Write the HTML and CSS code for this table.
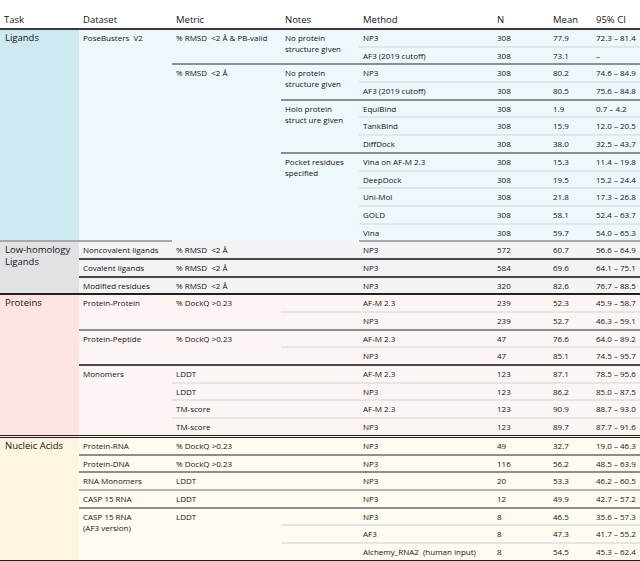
FILE: index.html
```html
<!DOCTYPE html>
<html>
<head>
<meta charset="utf-8">
<link rel="stylesheet" href="styles.css">
</head>
<body>
<table class="results">
  <colgroup>
    <col class="c-task"><col class="c-data"><col class="c-metric"><col class="c-notes">
    <col class="c-method"><col class="c-n"><col class="c-mean"><col class="c-ci">
  </colgroup>
  <thead>
    <tr>
      <th>Task</th><th>Dataset</th><th>Metric</th><th>Notes</th><th>Method</th><th>N</th><th>Mean</th><th>95% CI</th>
    </tr>
  </thead>
  <tbody class="lig">
    <tr>
      <td class="task bg" rowspan="12">Ligands</td>
      <td rowspan="12" class="bg">PoseBusters&nbsp; V2</td>
      <td rowspan="2" class="bg b-gray">% RMSD &nbsp;&lt;2 Å &amp; PB-valid</td>
      <td rowspan="2" class="bg b-gray">No protein<br>structure given</td>
      <td class="b-light">NP3</td><td class="b-light">308</td><td class="b-light">77.9</td><td class="b-light">72.3 – 81.4</td>
    </tr>
    <tr><td class="b-gray">AF3 (2019 cutoff)</td><td class="b-gray">308</td><td class="b-gray">73.1</td><td class="b-gray">–</td></tr>
    <tr>
      <td rowspan="10" class="bg">% RMSD &nbsp;&lt;2 Å</td>
      <td rowspan="2" class="bg b-gray">No protein<br>structure given</td>
      <td class="b-light">NP3</td><td class="b-light">308</td><td class="b-light">80.2</td><td class="b-light">74.6 – 84.9</td>
    </tr>
    <tr><td class="b-gray">AF3 (2019 cutoff)</td><td class="b-gray">308</td><td class="b-gray">80.5</td><td class="b-gray">75.6 – 84.8</td></tr>
    <tr>
      <td rowspan="3" class="bg b-gray">Holo protein<br>struct ure given</td>
      <td class="b-light">EquiBind</td><td class="b-light">308</td><td class="b-light">1.9</td><td class="b-light">0.7 – 4.2</td>
    </tr>
    <tr><td class="b-light">TankBind</td><td class="b-light">308</td><td class="b-light">15.9</td><td class="b-light">12.0 – 20.5</td></tr>
    <tr><td class="b-gray">DiffDock</td><td class="b-gray">308</td><td class="b-gray">38.0</td><td class="b-gray">32.5 – 43.7</td></tr>
    <tr>
      <td rowspan="5" class="bg">Pocket residues<br>specified</td>
      <td class="b-light">Vina on AF-M 2.3</td><td class="b-light">308</td><td class="b-light">15.3</td><td class="b-light">11.4 – 19.8</td>
    </tr>
    <tr><td class="b-light">DeepDock</td><td class="b-light">308</td><td class="b-light">19.5</td><td class="b-light">15.2 – 24.4</td></tr>
    <tr><td class="b-light">Uni-Mol</td><td class="b-light">308</td><td class="b-light">21.8</td><td class="b-light">17.3 – 26.8</td></tr>
    <tr><td class="b-light">GOLD</td><td class="b-light">308</td><td class="b-light">58.1</td><td class="b-light">52.4 – 63.7</td></tr>
    <tr><td>Vina</td><td>308</td><td>59.7</td><td>54.0 – 65.3</td></tr>
  </tbody>
  <tbody class="low">
    <tr>
      <td class="task bg" rowspan="3">Low-homology<br>Ligands</td>
      <td class="b-dark">Noncovalent ligands</td><td class="b-dark">% RMSD &nbsp;&lt;2 Å</td><td class="b-dark"></td>
      <td class="b-dark">NP3</td><td class="b-dark">572</td><td class="b-dark">60.7</td><td class="b-dark">56.6 – 64.9</td>
    </tr>
    <tr>
      <td class="b-dark">Covalent ligands</td><td class="b-dark">% RMSD &nbsp;&lt;2 Å</td><td class="b-dark"></td>
      <td class="b-dark">NP3</td><td class="b-dark">584</td><td class="b-dark">69.6</td><td class="b-dark">64.1 – 75.1</td>
    </tr>
    <tr>
      <td>Modified residues</td><td>% RMSD &nbsp;&lt;2 Å</td><td></td>
      <td>NP3</td><td>320</td><td>82.6</td><td>76.7 – 88.5</td>
    </tr>
  </tbody>
  <tbody class="prot">
    <tr>
      <td class="task bg" rowspan="8">Proteins</td>
      <td rowspan="2" class="b-gray">Protein-Protein</td>
      <td rowspan="2" class="b-gray">% DockQ &gt;0.23</td>
      <td class="b-light"></td>
      <td class="b-light">AF-M 2.3</td><td class="b-light">239</td><td class="b-light">52.3</td><td class="b-light">45.9 – 58.7</td>
    </tr>
    <tr><td class="b-gray"></td><td class="b-gray">NP3</td><td class="b-gray">239</td><td class="b-gray">52.7</td><td class="b-gray">46.3 – 59.1</td></tr>
    <tr>
      <td rowspan="2" class="b-dark">Protein-Peptide</td>
      <td rowspan="2" class="b-dark">% DockQ &gt;0.23</td>
      <td class="b-light"></td>
      <td class="b-light">AF-M 2.3</td><td class="b-light">47</td><td class="b-light">76.6</td><td class="b-light">64.0 – 89.2</td>
    </tr>
    <tr><td class="b-dark"></td><td class="b-dark">NP3</td><td class="b-dark">47</td><td class="b-dark">85.1</td><td class="b-dark">74.5 – 95.7</td></tr>
    <tr>
      <td rowspan="4">Monomers</td>
      <td class="b-light">LDDT</td><td class="b-light"></td>
      <td class="b-light">AF-M 2.3</td><td class="b-light">123</td><td class="b-light">87.1</td><td class="b-light">78.5 – 95.6</td>
    </tr>
    <tr><td class="b-light">LDDT</td><td class="b-light"></td><td class="b-light">NP3</td><td class="b-light">123</td><td class="b-light">86.2</td><td class="b-light">85.0 – 87.5</td></tr>
    <tr><td class="b-light">TM-score</td><td class="b-light"></td><td class="b-light">AF-M 2.3</td><td class="b-light">123</td><td class="b-light">90.9</td><td class="b-light">88.7 – 93.0</td></tr>
    <tr><td>TM-score</td><td></td><td>NP3</td><td>123</td><td>89.7</td><td>87.7 – 91.6</td></tr>
  </tbody>
  <tbody class="nuc">
    <tr>
      <td class="task bg" rowspan="7">Nucleic Acids</td>
      <td class="b-gray">Protein-RNA</td><td class="b-gray">% DockQ &gt;0.23</td><td class="b-gray"></td>
      <td class="b-gray">NP3</td><td class="b-gray">49</td><td class="b-gray">32.7</td><td class="b-gray">19.0 – 46.3</td>
    </tr>
    <tr>
      <td class="b-gray">Protein-DNA</td><td class="b-gray">% DockQ &gt;0.23</td><td class="b-gray"></td>
      <td class="b-gray">NP3</td><td class="b-gray">116</td><td class="b-gray">56.2</td><td class="b-gray">48.5 – 63.9</td>
    </tr>
    <tr>
      <td class="b-mid">RNA Monomers</td><td class="b-mid">LDDT</td><td class="b-mid"></td>
      <td class="b-mid">NP3</td><td class="b-mid">20</td><td class="b-mid">53.3</td><td class="b-mid">46.2 – 60.5</td>
    </tr>
    <tr>
      <td class="b-gray">CASP 15 RNA</td><td class="b-gray">LDDT</td><td class="b-gray"></td>
      <td class="b-gray">NP3</td><td class="b-gray">12</td><td class="b-gray">49.9</td><td class="b-gray">42.7 – 57.2</td>
    </tr>
    <tr>
      <td rowspan="3">CASP 15 RNA<br>(AF3 version)</td>
      <td rowspan="3">LDDT</td>
      <td class="b-light"></td>
      <td class="b-light">NP3</td><td class="b-light">8</td><td class="b-light">46.5</td><td class="b-light">35.6 – 57.3</td>
    </tr>
    <tr><td class="b-light"></td><td class="b-light">AF3</td><td class="b-light">8</td><td class="b-light">47.3</td><td class="b-light">41.7 – 55.2</td></tr>
    <tr><td></td><td>Alchemy_RNA2 &nbsp;(human input)</td><td>8</td><td>54.5</td><td>45.3 – 62.4</td></tr>
  </tbody>
</table>
</body>
</html>
```
FILE: styles.css
```css
html, body {
  margin: 0;
  padding: 0;
  background: #ffffff;
}
body {
  font-family: "Open Sans", "Liberation Sans", sans-serif;
  color: #141414;
}
.results {
  width: 640px;
  border-collapse: separate;
  border-spacing: 0;
  table-layout: fixed;
  margin-top: 12px;
}
.c-task { width: 79px; }
.c-data { width: 93px; }
.c-metric { width: 109px; }
.c-notes { width: 78px; }
.c-method { width: 134px; }
.c-n { width: 56px; }
.c-mean { width: 43px; }
.c-ci { width: 48px; }

thead th {
  font-weight: 400;
  font-size: 9.5px;
  text-align: left;
  padding: 0 0 2px 4px;
  height: 14px;
  border-bottom: 2px solid #3a3a3a;
  vertical-align: bottom;
}
td {
  font-size: 8px;
  line-height: 11px;
  padding: 2px 0 0 4px;
  height: 13.7px;
  vertical-align: top;
  white-space: nowrap;
  border-bottom: 2px solid transparent;
}
td.task {
  font-size: 9.5px;
  line-height: 12px;
  padding-top: 2px;
  padding-left: 5px;
}
.b-light { border-bottom-color: #e2e6e9; }
.b-gray { border-bottom-color: #8e8e8e; }
.b-mid { border-bottom-color: #b5b5b5; }
.b-dark { border-bottom-color: #4a4a4a; }

.lig td { background: #eef7fb; }
.lig td.task { background: #cde9f1; }
.lig tr:last-child td, .lig td[rowspan="12"] { border-bottom: 2px solid #a9a9a9; }

.low td { background: #f3f3f6; }
.low td.task { background: #e2e2e6; }
.low tr:last-child td, .low td.task { border-bottom: 2px solid #222; }

.prot td { background: #fdf5f3; }
.prot td.task { background: #fde4e3; }
.prot tr:last-child td, .prot td.task, .prot td[rowspan="4"] { border-bottom: 3px double #222; }

.nuc td { background: #fffbf1; }
.nuc td.task { background: #fef5e1; }
.nuc tr:last-child td, .nuc td.task, .nuc td[rowspan="3"] { border-bottom: 3px double #222; }
```
